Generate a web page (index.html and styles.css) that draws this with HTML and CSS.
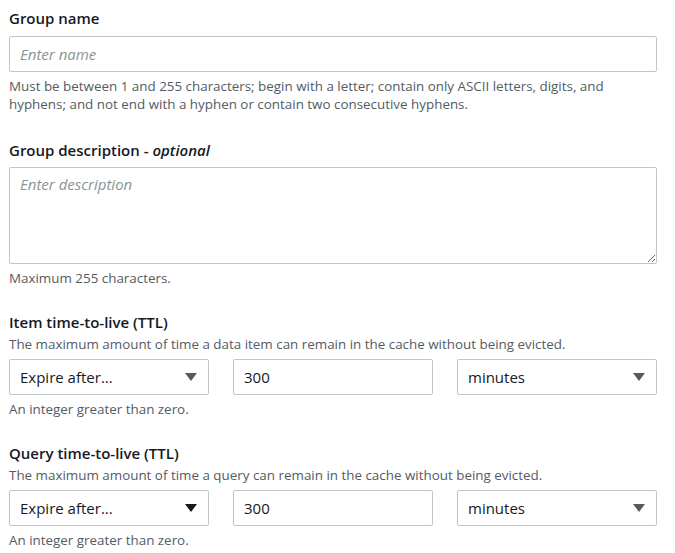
FILE: index.html
```html
<!DOCTYPE html>
<html lang="en">
<head>
<meta charset="utf-8">
<title>Group settings</title>
<link rel="stylesheet" href="styles.css">
</head>
<body>
<form class="form">
  <div class="field">
    <label class="label" for="gname">Group name</label>
    <input class="input" id="gname" type="text" placeholder="Enter name">
    <p class="hint first">Must be between 1 and 255 characters; begin with a letter; contain only ASCII letters, digits, and hyphens; and not end with a hyphen or contain two consecutive hyphens.</p>
  </div>
  <div class="field">
    <label class="label" for="gdesc">Group description - <i>optional</i></label>
    <textarea class="textarea" id="gdesc" placeholder="Enter description"></textarea>
    <p class="hint">Maximum 255 characters.</p>
  </div>
  <div class="field">
    <div class="label">Item time-to-live (TTL)</div>
    <p class="desc">The maximum amount of time a data item can remain in the cache without being evicted.</p>
    <div class="row">
      <div class="select"><span>Expire after...</span><span class="caret"></span></div>
      <input class="input" type="text" value="300">
      <div class="select"><span>minutes</span><span class="caret"></span></div>
    </div>
    <p class="hint">An integer greater than zero.</p>
  </div>
  <div class="field">
    <div class="label">Query time-to-live (TTL)</div>
    <p class="desc">The maximum amount of time a query can remain in the cache without being evicted.</p>
    <div class="row">
      <div class="select"><span>Expire after...</span><span class="caret dark"></span></div>
      <input class="input" type="text" value="300">
      <div class="select"><span>minutes</span><span class="caret"></span></div>
    </div>
    <p class="hint">An integer greater than zero.</p>
  </div>
</form>
</body>
</html>
```

FILE: styles.css
```css
* { box-sizing: border-box; }
html, body { margin: 0; padding: 0; background: #fff; }
body {
  font-family: "Open Sans", "Noto Sans", sans-serif;
  color: #16191f;
}
.form {
  width: 675px;
  padding: 7px 18px 0 9px;
  display: flex;
  flex-direction: column;
  gap: 24px;
}
.field { display: flex; flex-direction: column; }
.label {
  font-size: 15px;
  line-height: 22px;
  font-weight: 600;
  color: #16191f;
}
.label i { font-weight: 600; }
.desc {
  margin: 2px 0 0;
  font-size: 13.4px;
  line-height: 18px;
  color: #545b64;
}
.hint {
  margin: 5px 0 0;
  font-size: 13.4px;
  line-height: 18px;
  color: #545b64;
}
.hint.first { margin-bottom: 2px; }
.input, .textarea, .select {
  margin-top: 7px;
  border: 1px solid #bfc6c8;
  border-radius: 2px;
  background: #fff;
  font-family: inherit;
  font-size: 15px;
  color: #16191f;
  padding: 0 10px;
  outline: none;
}
.input { height: 36px; width: 100%; }
.textarea {
  height: 97px;
  width: 100%;
  padding-top: 5px;
  margin-top: 6px;
  resize: vertical;
  line-height: 22px;
}
.input::placeholder, .textarea::placeholder {
  color: #879596;
  font-style: italic;
}
.row {
  display: grid;
  grid-template-columns: 200px 200px 1fr;
  gap: 24px;
  margin-top: 6px;
}
.row .input, .row .select { margin-top: 0; }
.select {
  height: 36px;
  display: flex;
  align-items: center;
  justify-content: space-between;
  padding: 0 11px 0 10px;
}
.caret {
  width: 0; height: 0;
  border-left: 6px solid transparent;
  border-right: 6px solid transparent;
  border-top: 8px solid #545b64;
}
.caret.dark { border-top-color: #16191f; }
```
